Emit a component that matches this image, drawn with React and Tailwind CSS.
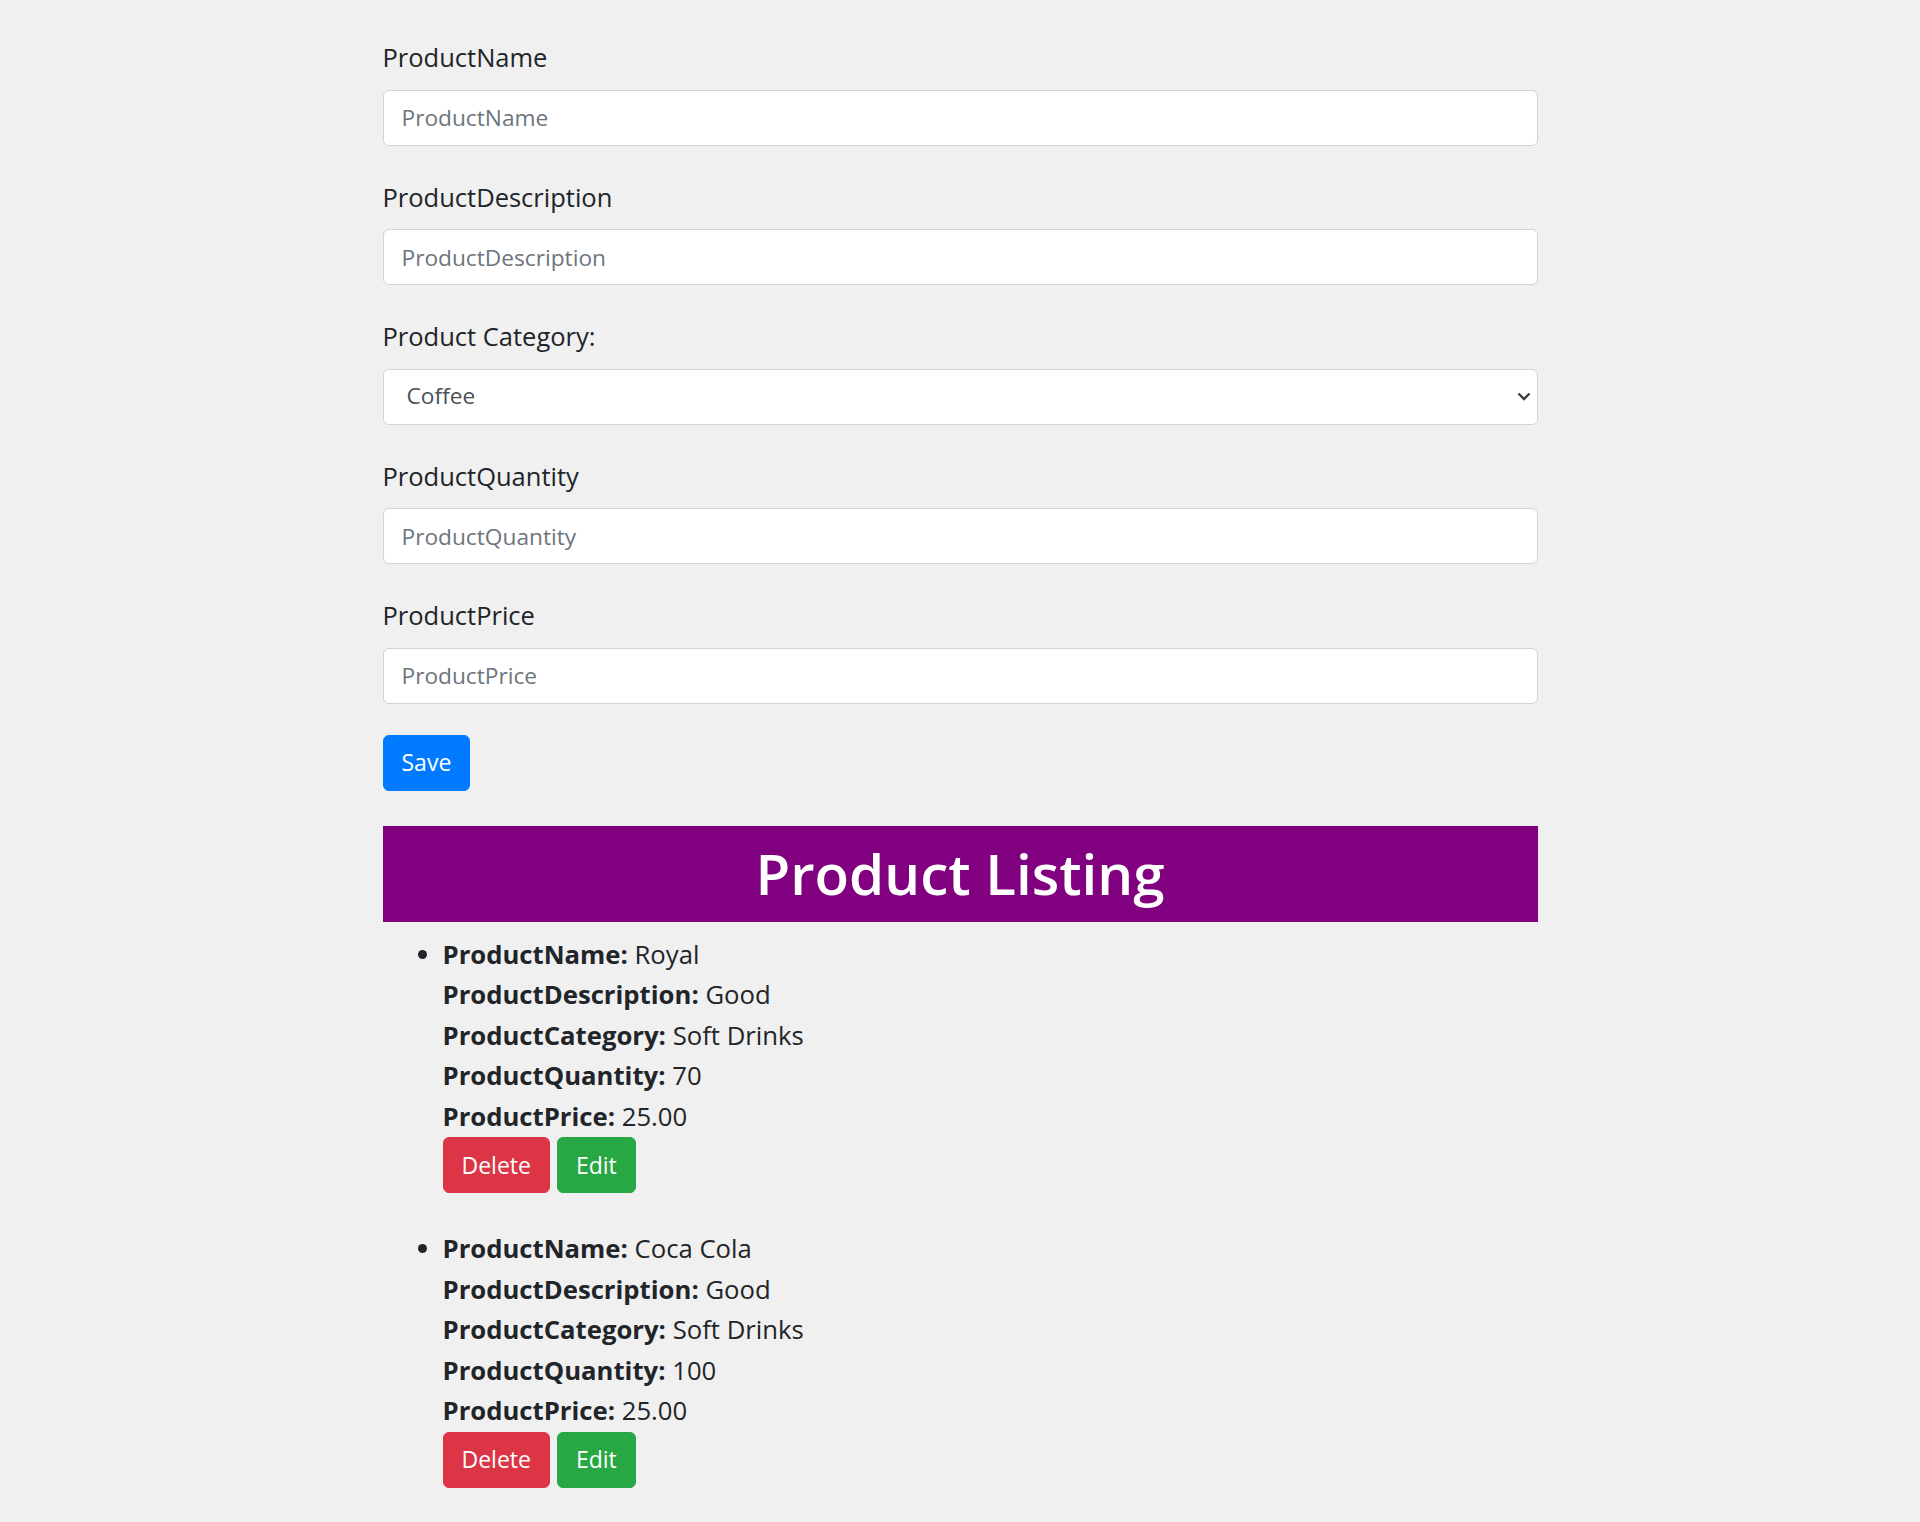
import React from "react";

const fields = [
  { label: "ProductName", placeholder: "ProductName" },
  { label: "ProductDescription", placeholder: "ProductDescription" },
  { label: "Product Category:", select: true },
  { label: "ProductQuantity", placeholder: "ProductQuantity" },
  { label: "ProductPrice", placeholder: "ProductPrice" },
];

const products = [
  { name: "Royal", description: "Good", category: "Soft Drinks", quantity: "70", price: "25.00" },
  { name: "Coca Cola", description: "Good", category: "Soft Drinks", quantity: "100", price: "25.00" },
];

function Field({ field }) {
  return (
    <div className="mb-[31px]">
      <label className="mb-[12px] block text-[25.5px] leading-[40.5px] text-[#212529]">
        {field.label}
      </label>
      {field.select ? (
        <div className="relative">
          <select
            defaultValue="Coffee"
            className="block h-[56px] w-full appearance-none rounded-[6px] border border-[#ced4da] bg-white pl-[23px] text-[22.7px] text-[#495057] outline-none"
          >
            <option>Coffee</option>
            <option>Soft Drinks</option>
            <option>Tea</option>
          </select>
          <svg
            className="pointer-events-none absolute right-[7px] top-[23px]"
            width="14"
            height="9"
            viewBox="0 0 14 9"
            fill="none"
          >
            <path d="M1.5 1.5 L7 7 L12.5 1.5" stroke="#3a3a3a" strokeWidth="2.4" />
          </svg>
        </div>
      ) : (
        <input
          placeholder={field.placeholder}
          className="block h-[56px] w-full rounded-[6px] border border-[#ced4da] bg-white px-[18px] text-[22.7px] text-[#495057] outline-none placeholder:text-[#6c757d]"
        />
      )}
    </div>
  );
}

function Line({ k, v }) {
  return (
    <div className="leading-[40.5px]">
      <strong className="font-bold">{k}:</strong> {v}
    </div>
  );
}

function ProductItem({ p, last }) {
  return (
    <li className={last ? "" : "mb-[36px]"}>
      <Line k="ProductName" v={p.name} />
      <Line k="ProductDescription" v={p.description} />
      <Line k="ProductCategory" v={p.category} />
      <Line k="ProductQuantity" v={p.quantity} />
      <Line k="ProductPrice" v={p.price} />
      <div className="flex gap-[7px]">
        <button className="h-[56px] rounded-[6px] border border-[#dc3545] bg-[#dc3545] px-[18px] text-[23px] text-white">
          Delete
        </button>
        <button className="h-[56px] rounded-[6px] border border-[#28a745] bg-[#28a745] px-[18px] text-[23px] text-white">
          Edit
        </button>
      </div>
    </li>
  );
}

export default function App() {
  return (
    <div
      className="min-h-[1522px] bg-[#f0f0f0] text-[#212529]"
      style={{ fontFamily: '"Open Sans", "Noto Sans", sans-serif' }}
    >
      <div className="mx-auto w-[1155px] pb-[35px] pt-[37px]">
        <form onSubmit={(e) => e.preventDefault()}>
          {fields.map((f) => (
            <Field key={f.label} field={f} />
          ))}
          <button className="h-[56px] rounded-[6px] border border-[#007bff] bg-[#007bff] px-[18px] text-[23px] text-white">
            Save
          </button>
        </form>

        <h1 className="mt-[35px] bg-[#800080] py-[12px] text-center text-[56.5px] font-semibold leading-[72px] text-white">
          Product Listing
        </h1>

        <ul className="mt-[13px] list-disc pl-[60px] text-[25.7px]">
          {products.map((p, i) => (
            <ProductItem key={p.name} p={p} last={i === products.length - 1} />
          ))}
        </ul>
      </div>
    </div>
  );
}
